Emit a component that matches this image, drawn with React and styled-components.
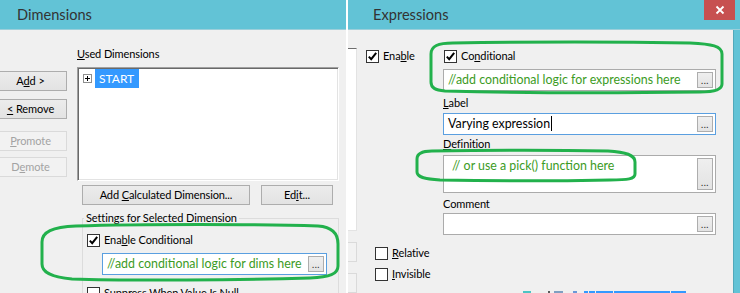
import React from "react"
import styled, { createGlobalStyle } from "styled-components"

const teal = "#62c3d6"
const green = "#22b14c"
const commentGreen = "#3c9b24"

const GlobalStyle = createGlobalStyle`
  html, body {
    margin: 0;
    padding: 0;
    background: #f0f0f0;
  }
  body {
    font-family: "Lato", "Liberation Sans", sans-serif;
    font-size: 11px;
    letter-spacing: -0.1px;
    color: #000;
  }
`

const Screen = styled.div`
  position: relative;
  width: 740px;
  height: 293px;
  display: flex;
  overflow: hidden;
  background: #f0f0f0;
`

const Window = styled.div`
  display: flex;
  flex-direction: column;
  width: ${p => p.$width}px;
  flex-shrink: 0;
  height: 100%;
`

const TitleBar = styled.div`
  height: 29px;
  flex-shrink: 0;
  display: flex;
  align-items: center;
  justify-content: space-between;
  padding-left: ${p => p.$indent}px;
  background: ${teal};
  border-bottom: 1px solid #9ccfda;
`

const Title = styled.span`
  font-size: 14.6px;
  letter-spacing: 0;
  color: #333;
`

const CloseButton = styled.span`
  align-self: flex-start;
  width: 31px;
  height: 20px;
  margin-right: 5px;
  background: #c75050;
  display: flex;
  align-items: center;
  justify-content: center;
`

const Divider = styled.div`
  width: 2px;
  flex-shrink: 0;
  background: #fff;
`

const Body = styled.div`
  flex: 1;
  display: flex;
  min-height: 0;
  background: #f0f0f0;
`

const SideButtons = styled.div`
  display: flex;
  flex-direction: column;
  width: 73px;
  margin-left: -6px;
  padding-top: 41px;
  flex-shrink: 0;
`

const Button = styled.button`
  display: block;
  height: 20px;
  width: ${p => (p.$w ? `${p.$w}px` : "100%")};
  margin: ${p => p.$top || 0}px 0 0 ${p => p.$left || 0}px;
  padding: 0;
  box-sizing: border-box;
  flex-shrink: 0;
  font: inherit;
  letter-spacing: inherit;
  line-height: 18px;
  color: ${p => (p.disabled ? "#a3a3a3" : "#000")};
  background: ${p => (p.disabled ? "#f2f2f2" : "linear-gradient(#ececec, #e3e3e3)")};
  border: 1px solid ${p => (p.disabled ? "#dadada" : "#adadad")};
`

const Key = styled.span`
  text-decoration: underline;
`

const DimPane = styled.div`
  display: flex;
  flex-direction: column;
  width: 262px;
  margin-left: 10px;
  padding-top: 17px;
  flex-shrink: 0;
`

const FieldLabel = styled.div`
  height: 14px;
  line-height: 14px;
  margin-top: ${p => p.$top || 0}px;
`

const ListBox = styled.div`
  margin-top: 6px;
  height: 114px;
  flex-shrink: 0;
  box-sizing: border-box;
  background: #fff;
  border: 1px solid;
  border-color: #a0a0a0 #fff #fff #a0a0a0;
  box-shadow: inset 1px 1px 0 #696969, inset -1px -1px 0 #e3e3e3;
  padding: 1px;
`

const TreeRow = styled.div`
  display: flex;
  align-items: center;
  height: 19px;
  padding-left: 4px;
  gap: 3px;
`

const Expander = styled.span`
  width: 9px;
  height: 9px;
  box-sizing: border-box;
  border: 1px solid #8e8f8f;
  background: #fff;
  display: flex;
  align-items: center;
  justify-content: center;
`

const Selected = styled.span`
  width: 44px;
  height: 19px;
  line-height: 19px;
  padding-left: 4px;
  box-sizing: border-box;
  background: #3399ff;
  color: #fff;
  font-size: 12px;
  letter-spacing: 0;
`

const ButtonRow = styled.div`
  display: flex;
  margin-top: 4px;
`

const GroupBox = styled.fieldset`
  flex: 1;
  min-width: 0;
  margin: 6px 0 0 5px;
  padding: 0 0 0 4px;
  box-sizing: border-box;
  border: 1px solid #dcdcdc;
  border-bottom: none;
  display: flex;
  flex-direction: column;
`

const GroupTitle = styled.legend`
  padding: 0 2px;
  margin-left: -3px;
  line-height: 14px;
`

const CheckRow = styled.div`
  display: flex;
  align-items: center;
  gap: 4px;
  height: 14px;
  line-height: 14px;
  flex-shrink: 0;
  margin: ${p => p.$top || 0}px 0 0 ${p => p.$left || 0}px;
`

const Box = styled.span`
  width: 13px;
  height: 13px;
  box-sizing: border-box;
  border: 1px solid #333;
  background: #fff;
  display: flex;
  align-items: center;
  justify-content: center;
  flex-shrink: 0;
`

const Field = styled.div`
  display: flex;
  align-items: stretch;
  flex-shrink: 0;
  width: ${p => (p.$w ? `${p.$w}px` : "auto")};
  height: ${p => p.$h || 22}px;
  margin: ${p => p.$top || 0}px 0 0 ${p => p.$left || 0}px;
  box-sizing: border-box;
  border: 1px solid ${p => (p.$focus ? "#5a9fe0" : "#ababab")};
  background: #fff;
  padding: 2px;
`

const FieldText = styled.div`
  flex: 1;
  min-width: 0;
  padding-left: ${p => p.$indent || 2}px;
  font-size: 12.4px;
  letter-spacing: 0;
  line-height: 16px;
  white-space: nowrap;
  overflow: hidden;
  color: ${p => (p.$comment ? commentGreen : "#000")};
`

const Caret = styled.span`
  display: inline-block;
  width: 1px;
  height: 15px;
  margin-left: 1px;
  vertical-align: -3px;
  background: #000;
`

const Dots = styled.span`
  width: 16px;
  flex-shrink: 0;
  box-sizing: border-box;
  border: 1px solid #adadad;
  background: linear-gradient(#efefef, #e3e3e3);
  display: flex;
  justify-content: center;
  align-items: flex-end;
  padding-bottom: 3px;
  font-size: 9px;
  line-height: 6px;
  letter-spacing: 0.5px;
  color: #222;
`

const CutColumn = styled.div`
  width: 9px;
  flex-shrink: 0;
  display: flex;
  flex-direction: column;
`

const CutList = styled.div`
  margin-top: 18px;
  height: 183px;
  box-sizing: border-box;
  background: #fff;
  border-top: 1px solid #6d6d6d;
  border-right: 1px solid #e3e3e3;
  border-bottom: 1px solid #e3e3e3;
`

const CutButton = styled.div`
  margin-top: 11px;
  height: 20px;
  flex-shrink: 0;
  box-sizing: border-box;
  background: #f2f2f2;
  border: 1px solid #dadada;
  border-left: none;
`

const ExprPane = styled.div`
  flex: 1;
  display: flex;
  flex-direction: column;
  padding: 19px 0 0 9px;
`

const TopRow = styled.div`
  display: flex;
`

const EnableCol = styled.div`
  width: 77px;
  flex-shrink: 0;
`

const FormCol = styled.div`
  width: 273px;
  display: flex;
  flex-direction: column;
`

const Strip = styled.div`
  display: flex;
  height: 2px;
  margin-top: auto;
`

const StripBit = styled.span`
  width: ${p => p.$w}px;
  margin-left: ${p => p.$gap}px;
  background: ${p => p.$c};
`

const FrameEdge = styled.div`
  width: 6px;
  flex-shrink: 0;
  background: ${teal};
  border-left: 1px solid #52a9bb;
`

const Marks = styled.svg`
  position: absolute;
  left: 0;
  top: 0;
  pointer-events: none;
`

// pieces of whatever sits under the window, peeking out at the bottom edge
const stripBits = [
  { gap: 157, w: 8, c: "#4cc4c4" },
  { gap: 17, w: 2, c: "#5a5a5a" },
  { gap: 4, w: 9, c: "#7f9fc2" },
  { gap: 10, w: 4, c: "#6b98d8" },
  { gap: 7, w: 4, c: "#3399ff" },
  { gap: 1, w: 6, c: "#3399ff" },
  { gap: 1, w: 17, c: "#3399ff" },
  { gap: 1, w: 56, c: "#3399ff" },
  { gap: 1, w: 15, c: "#3399ff" },
]

const Check = () => (
  <svg width="11" height="11" viewBox="0 0 11 11">
    <path d="M1.8 5.6 L4.2 8.2 L9.2 1.8" fill="none" stroke="#000" strokeWidth="2" />
  </svg>
)

const CheckBox = ({ checked, children, top, left }) => (
  <CheckRow $top={top} $left={left}>
    <Box>{checked && <Check />}</Box>
    <span>{children}</span>
  </CheckRow>
)

const Ellipsis = () => <Dots>...</Dots>

const App = () => (
  <>
    <GlobalStyle />
    <Screen>
      <Window $width={346}>
        <TitleBar $indent={17}>
          <Title>Dimensions</Title>
        </TitleBar>
        <Body>
          <SideButtons>
            <Button>
              A<Key>d</Key>d &gt;
            </Button>
            <Button $top={8}>
              <Key>&lt;</Key> Remove
            </Button>
            <Button $top={12} disabled>
              <Key>P</Key>romote
            </Button>
            <Button $top={6} disabled>
              D<Key>e</Key>mote
            </Button>
          </SideButtons>
          <DimPane>
            <FieldLabel>
              <Key>U</Key>sed Dimensions
            </FieldLabel>
            <ListBox>
              <TreeRow>
                <Expander>
                  <svg width="7" height="7" viewBox="0 0 7 7">
                    <path d="M1 3.5 H6 M3.5 1 V6" stroke="#000" strokeWidth="1" />
                  </svg>
                </Expander>
                <Selected>START</Selected>
              </TreeRow>
            </ListBox>
            <ButtonRow>
              <Button $w={168} $left={5}>
                Add <Key>C</Key>alculated Dimension...
              </Button>
              <Button $w={72} $left={11}>
                Ed<Key>i</Key>t...
              </Button>
            </ButtonRow>
            <GroupBox>
              <GroupTitle>Settings for Selected Dimension</GroupTitle>
              <CheckBox checked top={8}>
                Ena<Key>b</Key>le Conditional
              </CheckBox>
              <Field $focus $w={225} $top={6} $left={15}>
                <FieldText $comment>//add conditional logic for dims here</FieldText>
                <Ellipsis />
              </Field>
              <CheckBox top={11}>
                <Key>S</Key>uppress When Value Is Null
              </CheckBox>
            </GroupBox>
          </DimPane>
        </Body>
      </Window>

      <Divider />

      <Window $width={392}>
        <TitleBar $indent={25}>
          <Title>Expressions</Title>
          <CloseButton>
            <svg width="10" height="10" viewBox="0 0 10 10">
              <path d="M1.5 1.5 L8.5 8.5 M8.5 1.5 L1.5 8.5" stroke="#fff" strokeWidth="1.8" />
            </svg>
          </CloseButton>
        </TitleBar>
        <Body>
          <CutColumn>
            <CutList />
            <CutButton />
            <CutButton />
          </CutColumn>
          <ExprPane>
            <TopRow>
              <EnableCol>
                <CheckBox checked>
                  Ena<Key>b</Key>le
                </CheckBox>
              </EnableCol>
              <FormCol>
                <CheckBox checked left={1}>
                  Co<Key>n</Key>ditional
                </CheckBox>
                <Field $top={6}>
                  <FieldText $comment>//add conditional logic for expressions here</FieldText>
                  <Ellipsis />
                </Field>
                <FieldLabel $top={5}>
                  <Key>L</Key>abel
                </FieldLabel>
                <Field $focus $top={3}>
                  <FieldText>
                    Varying expression
                    <Caret />
                  </FieldText>
                  <Ellipsis />
                </Field>
                <FieldLabel $top={2}>
                  <Key>D</Key>efinition
                </FieldLabel>
                <Field $h={38} $top={4}>
                  <FieldText $comment $indent={6}>
                    // or use a pick() function here
                  </FieldText>
                  <Ellipsis />
                </Field>
                <FieldLabel $top={4}>Comment</FieldLabel>
                <Field $top={2}>
                  <FieldText />
                  <Ellipsis />
                </Field>
              </FormCol>
            </TopRow>
            <CheckBox top={11} left={9}>
              <Key>R</Key>elative
            </CheckBox>
            <CheckBox top={7} left={9}>
              <Key>I</Key>nvisible
            </CheckBox>
            <Strip>
              {stripBits.map((b, i) => (
                <StripBit key={i} $gap={b.gap} $w={b.w} $c={b.c} />
              ))}
            </Strip>
          </ExprPane>
          <FrameEdge />
        </Body>
      </Window>

      <Marks width="740" height="293" viewBox="0 0 740 293">
        <g fill="none" stroke={green} strokeWidth="3" strokeLinejoin="round">
          <path d="M76 226 C140 224 260 224 318 226 C333 227 338 234 338 244 L338 266 C338 274 330 277 310 278 C240 280 130 281 72 279 C50 277 42 272 42 264 L42 242 C42 232 52 227 76 226 Z" />
          <path d="M453 43 C520 42 630 42 690 43 C712 44 722 46 722 54 L722 84 C722 90 712 92 700 92 C630 93 520 93 445 91 C435 90 431 88 431 82 L431 54 C431 46 438 43 453 43 Z" />
          <path d="M432 151 C490 150 560 150 608 151 C626 152 635 155 635 162 L635 174 C635 179 628 180 610 180 C560 181 490 181 440 180 C424 179 417 177 417 172 L417 159 C417 154 422 151 432 151 Z" />
        </g>
      </Marks>
    </Screen>
  </>
)

export default App
